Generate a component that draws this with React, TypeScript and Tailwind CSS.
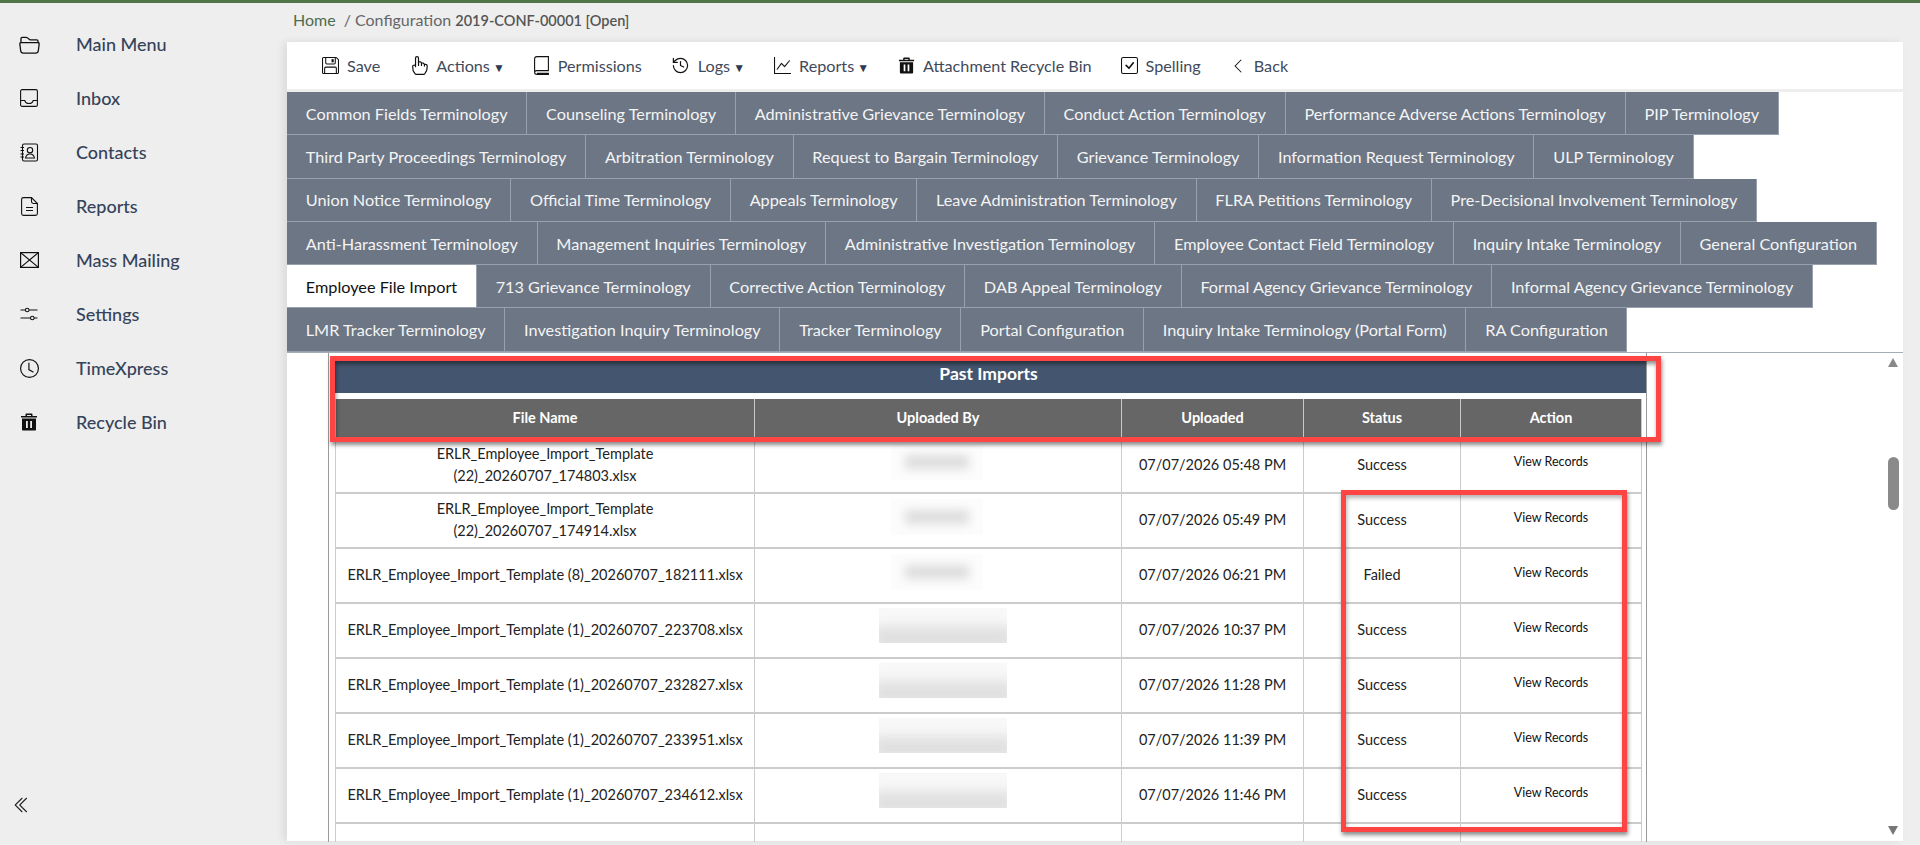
import { History } from 'lucide-react'
import {
  BsCheckSquare,
  BsChevronDoubleLeft,
  BsChevronLeft,
  BsClock,
  BsFloppy,
  BsFolder2Open,
  BsGraphUp,
  BsHandIndex,
} from 'react-icons/bs'
import type { ReactNode } from 'react'

function InboxIcon() {
  return (
    <svg width="18" height="18" viewBox="0 0 18 18" fill="none" stroke="currentColor" strokeWidth="1.1">
      <rect x="0.6" y="0.6" width="16.800" height="16.800" rx="1.500" />
      <path d="M0.600 11.500h4.200c.5 2 2 3 4.200 3s3.700-1 4.200-3h4.200" />
    </svg>
  )
}

function ReportIcon() {
  return (
    <svg width="17" height="19" viewBox="0 0 17 19" fill="none" stroke="currentColor" strokeWidth="1.1">
      <path d="M2.500.6h8l5.900 5.900V16.500c0 1-.9 1.900-1.900 1.900h-12c-1 0-1.900-.9-1.900-1.900V2.500C.6 1.500 1.500.6 2.500.6z" />
      <path d="M10.500.6v4c0 1.100.8 1.900 1.900 1.900h4M5 10.500h7M5 13.500h7" />
    </svg>
  )
}

function ContactsIcon() {
  return (
    <svg width="19" height="19" viewBox="0 0 19 19" fill="none" stroke="currentColor" strokeWidth="1.1">
      <rect x="2.5" y="1" width="15" height="17" rx="1.5" />
      <path d="M0.5 4.5h3.5M0.5 7.5h3.5M0.5 11h3.5M0.5 14h3.5" />
      <circle cx="10" cy="7.2" r="2.7" />
      <path d="M5.5 15c.6-2.8 2.2-4 4.5-4s3.900 1.200 4.500 4z" />
    </svg>
  )
}

function MailIcon() {
  return (
    <svg width="19" height="16" viewBox="0 0 19 16" fill="none" stroke="currentColor" strokeWidth="1.2">
      <rect x="0.6" y="0.6" width="17.800" height="14.800" />
      <path d="M0.6 0.6L18.400 15.400M18.400 0.600L0.600 15.400" />
    </svg>
  )
}

function SlidersIcon() {
  return (
    <svg width="18" height="14" viewBox="0 0 18 14" fill="none" stroke="currentColor" strokeWidth="1.1">
      <path d="M0.500 3h5M9 3h8.500M0.500 11h10M14 11h3.500" />
      <circle cx="7.200" cy="3" r="1.800" />
      <circle cx="12.300" cy="11" r="1.800" />
    </svg>
  )
}

function TrashIcon({ size = 18 }: { size?: number }) {
  return (
    <svg width={size} height={size} viewBox="0 0 18 18" fill="currentColor">
      <path d="M6.500 0.500h5c.6 0 1 .4 1 1V3H17v1.500H1V3h4.500V1.500c0-.6.4-1 1-1zM7 3h4V2H7z" />
      <path d="M2 5.500h14V16.500c0 .6-.4 1-1 1H3c-.6 0-1-.4-1-1zM6 8v7h1.800V8zm4.200 0v7H12V8z" fillRule="evenodd" />
    </svg>
  )
}

function BookIcon() {
  return (
    <svg width="16" height="19" viewBox="0 0 16 19" fill="none" stroke="currentColor" strokeWidth="1.1">
      <path d="M3 .6h11.400v14H3c-1.300 0-2.400.7-2.400 1.800V3C.6 1.600 1.600.6 3 .6z" />
      <path d="M.6 16.300c0 1.200 1.100 2.100 2.400 2.100h11.400v-1.100H3" />
    </svg>
  )
}

const menuItems: { label: string; icon: ReactNode }[] = [
  { label: 'Main Menu', icon: <BsFolder2Open size={21} /> },
  { label: 'Inbox', icon: <InboxIcon /> },
  { label: 'Contacts', icon: <ContactsIcon /> },
  { label: 'Reports', icon: <ReportIcon /> },
  { label: 'Mass Mailing', icon: <MailIcon /> },
  { label: 'Settings', icon: <SlidersIcon /> },
  { label: 'TimeXpress', icon: <BsClock size={19} /> },
  { label: 'Recycle Bin', icon: <TrashIcon /> },
]

const toolbarItems: { label: string; icon: ReactNode; caret?: boolean }[] = [
  { label: 'Save', icon: <BsFloppy size={17} /> },
  { label: 'Actions', icon: <BsHandIndex size={19} />, caret: true },
  { label: 'Permissions', icon: <BookIcon /> },
  { label: 'Logs', icon: <History size={19} strokeWidth={1.5} />, caret: true },
  { label: 'Reports', icon: <BsGraphUp size={17} />, caret: true },
  { label: 'Attachment Recycle Bin', icon: <TrashIcon size={17} /> },
  { label: 'Spelling', icon: <BsCheckSquare size={17} /> },
  { label: 'Back', icon: <BsChevronLeft size={16} /> },
]

const tabs = [
  'Common Fields Terminology',
  'Counseling Terminology',
  'Administrative Grievance Terminology',
  'Conduct Action Terminology',
  'Performance Adverse Actions Terminology',
  'PIP Terminology',
  'Third Party Proceedings Terminology',
  'Arbitration Terminology',
  'Request to Bargain Terminology',
  'Grievance Terminology',
  'Information Request Terminology',
  'ULP Terminology',
  'Union Notice Terminology',
  'Official Time Terminology',
  'Appeals Terminology',
  'Leave Administration Terminology',
  'FLRA Petitions Terminology',
  'Pre-Decisional Involvement Terminology',
  'Anti-Harassment Terminology',
  'Management Inquiries Terminology',
  'Administrative Investigation Terminology',
  'Employee Contact Field Terminology',
  'Inquiry Intake Terminology',
  'General Configuration',
  'Employee File Import',
  '713 Grievance Terminology',
  'Corrective Action Terminology',
  'DAB Appeal Terminology',
  'Formal Agency Grievance Terminology',
  'Informal Agency Grievance Terminology',
  'LMR Tracker Terminology',
  'Investigation Inquiry Terminology',
  'Tracker Terminology',
  'Portal Configuration',
  'Inquiry Intake Terminology (Portal Form)',
  'RA Configuration',
]

const rows = [
  { file: ['ERLR_Employee_Import_Template', '(22)_20260707_174803.xlsx'], wide: false, date: '07/07/2026 05:48 PM', status: 'Success' },
  { file: ['ERLR_Employee_Import_Template', '(22)_20260707_174914.xlsx'], wide: false, date: '07/07/2026 05:49 PM', status: 'Success' },
  { file: ['ERLR_Employee_Import_Template (8)_20260707_182111.xlsx'], wide: false, date: '07/07/2026 06:21 PM', status: 'Failed' },
  { file: ['ERLR_Employee_Import_Template (1)_20260707_223708.xlsx'], wide: true, date: '07/07/2026 10:37 PM', status: 'Success' },
  { file: ['ERLR_Employee_Import_Template (1)_20260707_232827.xlsx'], wide: true, date: '07/07/2026 11:28 PM', status: 'Success' },
  { file: ['ERLR_Employee_Import_Template (1)_20260707_233951.xlsx'], wide: true, date: '07/07/2026 11:39 PM', status: 'Success' },
  { file: ['ERLR_Employee_Import_Template (1)_20260707_234612.xlsx'], wide: true, date: '07/07/2026 11:46 PM', status: 'Success' },
]

function BlurredName({ wide }: { wide: boolean }) {
  if (wide) {
    return (
      <div className="mb-[10px] ml-[124px] h-[35px] w-[128px] overflow-hidden bg-[#f8f8f8]">
        <div className="ml-[-6px] mt-[18px] h-[24px] w-[140px] bg-[#e0e0e0] blur-[6px]" />
      </div>
    )
  }
  return (
    <div className="mb-[6px] ml-[136px] h-[36px] w-[92px] overflow-hidden bg-[#fcfcfc]">
      <div className="ml-[14px] mt-[11px] h-[14px] w-[64px] bg-[#dddddd] blur-[5px]" />
    </div>
  )
}

function Sidebar() {
  return (
    <aside className="flex h-[842px] w-[287px] shrink-0 flex-col justify-between bg-[#eeeeee] pt-[15px]">
      <nav className="flex flex-col">
        {menuItems.map((item) => (
          <div key={item.label} className="flex h-[54px] items-center pb-[2px] text-[#111]">
            <span className="flex w-[76px] justify-center pr-[18px]">{item.icon}</span>
            <span className="text-[18px] font-medium text-[#34435a]">{item.label}</span>
          </div>
        ))}
      </nav>
      <div className="mb-[31px] ml-[13px] text-[#222]">
        <BsChevronDoubleLeft size={18} />
      </div>
    </aside>
  )
}

function Toolbar() {
  return (
    <div className="flex h-[47px] items-center gap-[29px] bg-white pl-[35px] pt-[1px] text-[16.200px] text-[#3f4a5a]">
      {toolbarItems.map((item) => (
        <div key={item.label} className="flex items-center gap-[8px]">
          <span className="text-[#111]">{item.icon}</span>
          <span>
            {item.label}
            {item.caret && <span className="ml-[3px] text-[12px] text-[#2c3b52]">▼</span>}
          </span>
        </div>
      ))}
    </div>
  )
}

function Tabs() {
  return (
    <div className="flex flex-wrap border-b border-[#a5acb5]">
      {tabs.map((tab) => (
        <div
          key={tab}
          className={
            tab === 'Employee File Import'
              ? 'flex h-[43.25px] items-center border-r border-b border-[#98a1ad] bg-white px-[18.750px] pt-[2px] text-[16.250px] text-[#111]'
              : 'flex h-[43.25px] items-center border-r border-b border-[#98a1ad] bg-[#6c7685] px-[18.750px] pt-[2px] text-[16.250px] text-[#f4f4f4]'
          }
        >
          {tab}
        </div>
      ))}
    </div>
  )
}

function PastImports() {
  return (
    <div className="ml-[41px] h-[489px] w-[1319px] overflow-hidden border-x border-[#9a9a9a] pl-[6px] pt-[8px]">
      <div className="flex h-[32px] items-center justify-center bg-[#44566f] pb-[5px] pr-[4px] text-[17.500px] font-bold text-white">Past Imports</div>
      <table className="mt-[6px] w-[1306px] table-fixed border-collapse text-center text-[14.500px] text-[#222]">
        <colgroup>
          <col className="w-[419px]" />
          <col className="w-[367px]" />
          <col className="w-[182px]" />
          <col className="w-[157px]" />
          <col className="w-[181px]" />
        </colgroup>
        <thead>
          <tr className="h-[39px] bg-[#666666] text-white">
            {['File Name', 'Uploaded By', 'Uploaded', 'Status', 'Action'].map((h) => (
              <th key={h} className="border-x border-[#c8c8c8] font-bold">
                {h}
              </th>
            ))}
          </tr>
        </thead>
        <tbody>
          {rows.map((row) => (
            <tr key={row.date} className="h-[55px] border-b-2 border-[#cccccc]">
              <td className="border-x border-[#cccccc] leading-[22px]">
                {row.file.map((line) => (
                  <div key={line}>{line}</div>
                ))}
              </td>
              <td className="border-x border-[#cccccc]">
                <BlurredName wide={row.wide} />
              </td>
              <td className="border-x border-[#cccccc]">{row.date}</td>
              <td className="border-x border-[#cccccc]">{row.status}</td>
              <td className="border-x border-[#cccccc] pb-[4px] text-[12.500px] text-[#111]">View Records</td>
            </tr>
          ))}
          <tr className="h-[55px]">
            <td className="border-x border-[#cccccc]" />
            <td className="border-x border-[#cccccc]" />
            <td className="border-x border-[#cccccc]" />
            <td className="border-x border-[#cccccc]" />
            <td className="border-x border-[#cccccc]" />
          </tr>
        </tbody>
      </table>
    </div>
  )
}

export default function App() {
  return (
    <div className="relative h-[845px] w-[1920px] overflow-hidden bg-[#eeeeee] font-['Lato','Open_Sans',sans-serif]">
      <div className="h-[3px] bg-[#4f7549]" />
      <div className="flex">
        <Sidebar />
        <main className="w-[1616px]">
          <div className="flex h-[39px] items-center gap-[8px] pb-[5px] pl-[6px] text-[16px] text-[#666]">
            <span className="text-[#4d6b4f]">Home</span>
            <span>/ Configuration <b className="text-[14.500px] font-semibold text-[#555]">2019-CONF-00001 [Open]</b></span>
          </div>
          <div className="h-[799px] bg-white shadow-[-4px_0_8px_rgba(0,0,0,0.08)]">
            <Toolbar />
            <div className="h-[3px] bg-[#eeeeee]" />
            <Tabs />
            <PastImports />
          </div>
        </main>
      </div>

      {/* scrollbar of the content pane */}
      <div className="absolute left-[1888px] top-[358px] h-0 w-0 border-x-[5px] border-b-[9px] border-x-transparent border-b-[#888]" />
      <div className="absolute left-[1888px] top-[457px] h-[53px] w-[11px] rounded-full bg-[#8a8a8a]" />
      <div className="absolute left-[1888px] top-[826px] h-0 w-0 border-x-[5px] border-t-[9px] border-x-transparent border-t-[#777]" />

      {/* red annotation boxes drawn on the screenshot */}
      <div className="absolute left-[330px] top-[356px] h-[86px] w-[1331px] border-[5px] border-[#ff4444] shadow-[1px_3px_4px_rgba(0,0,0,0.45),inset_1px_3px_4px_rgba(0,0,0,0.45)]" />
      <div className="absolute left-[1341px] top-[490px] h-[342px] w-[286px] border-[5px] border-[#ff4444] shadow-[1px_3px_4px_rgba(0,0,0,0.45),inset_1px_3px_4px_rgba(0,0,0,0.3)]" />
    </div>
  )
}
